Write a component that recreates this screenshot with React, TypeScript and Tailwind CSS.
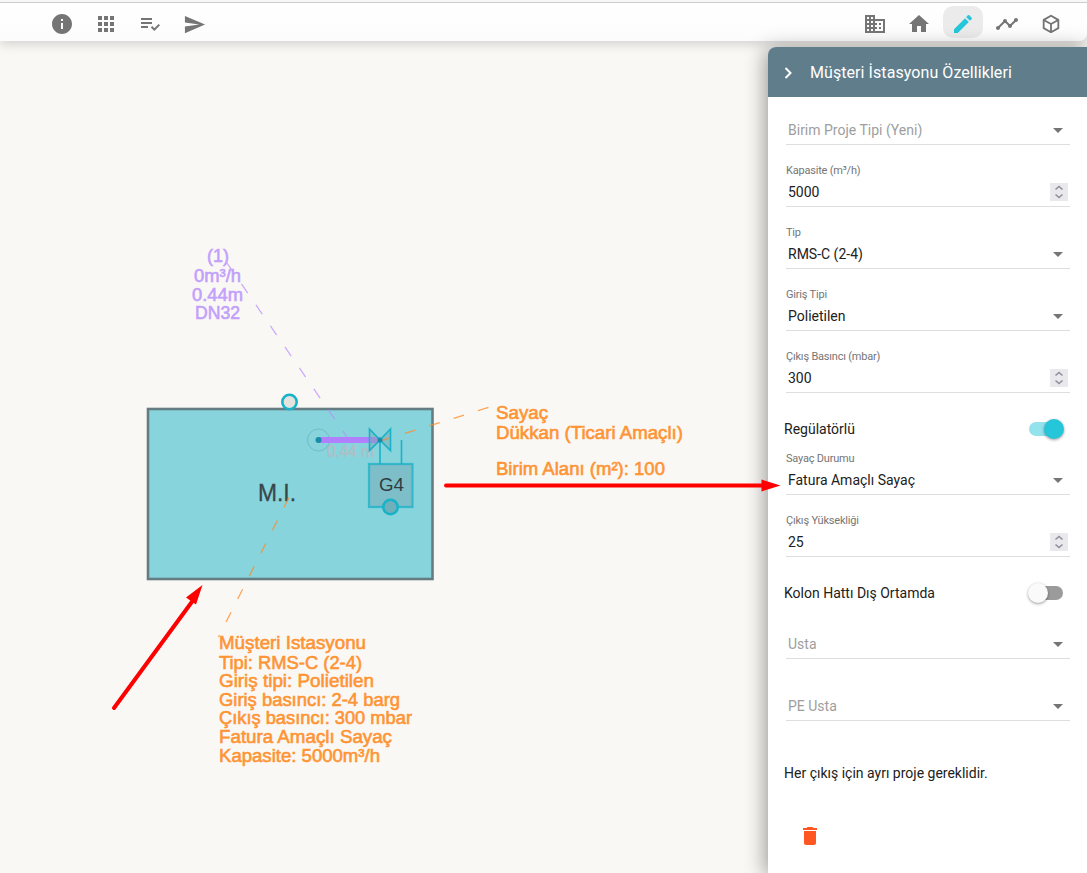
import type { ReactNode } from 'react';
import {
  MdApps,
  MdDelete,
  MdDomain,
  MdEdit,
  MdHome,
  MdInfo,
  MdPlaylistAddCheck,
  MdSend,
  MdTimeline,
} from 'react-icons/md';

function CubeIcon() {
  return (
    <svg viewBox="0 0 24 24" className="size-[22px] fill-current">
      <path d="M21 16.5c0 .38-.21.71-.53.88l-7.9 4.44c-.16.12-.36.18-.57.18s-.41-.06-.57-.18l-7.9-4.44A1 1 0 0 1 3 16.5v-9c0-.38.21-.71.53-.88l7.9-4.44c.16-.12.36-.18.57-.18s.41.06.57.18l7.9 4.44c.32.17.53.5.53.88v9M12 4.15 6.04 7.5 12 10.85l5.96-3.35L12 4.15M5 15.91l6 3.38v-6.71L5 9.21v6.7m14 0v-6.7l-6 3.37v6.71l6-3.38Z" />
    </svg>
  );
}

function ToolButton({ children, active = false }: { children: ReactNode; active?: boolean }) {
  return (
    <button
      className={`flex h-8 w-10 items-center justify-center rounded-[10px] pt-1 text-2xl ${
        active ? 'bg-[#ebebeb] text-[#26c6da]' : 'text-[#757575]'
      }`}
    >
      {children}
    </button>
  );
}

function Toolbar() {
  return (
    <header className="flex h-[41px] shrink-0 flex-col rounded-br-lg border-t-2 border-[#f7f7f7] bg-gradient-to-b from-white to-[#fcfcfc] shadow-[0_3px_12px_rgba(0,0,0,0.16)]">
      <div className="flex justify-between border-t border-[#cccccc] pl-[42px] pr-4 pt-[3px]">
        <div className="flex gap-1">
          <ToolButton><MdInfo /></ToolButton>
          <ToolButton><MdApps /></ToolButton>
          <ToolButton><MdPlaylistAddCheck /></ToolButton>
          <ToolButton><MdSend className="size-[23px]" /></ToolButton>
        </div>
        <div className="flex gap-1">
          <ToolButton><MdDomain /></ToolButton>
          <ToolButton><MdHome /></ToolButton>
          <ToolButton active><MdEdit /></ToolButton>
          <ToolButton><MdTimeline /></ToolButton>
          <ToolButton><CubeIcon /></ToolButton>
        </div>
      </div>
    </header>
  );
}

interface FieldProps {
  label?: string;
  value?: string;
  placeholder?: string;
  kind: 'select' | 'number';
}

function Field({ label, value, placeholder, kind }: FieldProps) {
  return (
    <div className="mx-[18px] mr-[17px] h-[62px] pt-[18px]">
      <div className="h-[11px] text-[11px] leading-3 tracking-[-0.2px] text-[#757575]">{label}</div>
      <div className="flex h-[31px] items-center justify-between border-b border-[#dedede] pl-0.5">
        <span className={`pt-px text-sm leading-5 ${value ? 'text-[#212121]' : 'text-[#9e9e9e]'}`}>
          {value ?? placeholder}
        </span>
        {kind === 'select' ? (
          <svg viewBox="0 0 10 5" className="mr-[7px] mt-0.5 h-[5px] w-2.5 fill-[#757575]">
            <path d="M0 0h10L5 5z" />
          </svg>
        ) : (
          <svg viewBox="0 0 18 18" className="mr-0.5 mt-0.5 size-[18px] bg-[#e9e9ed] fill-none stroke-[#8f8f9d] stroke-[1.6]">
            <path d="M5.5 6.5 9 3.5l3.5 3M5.5 11.5l3.5 3 3.5-3" />
          </svg>
        )}
      </div>
    </div>
  );
}

function Toggle({ label, on = false }: { label: string; on?: boolean }) {
  return (
    <div className="flex h-5 items-center justify-between pl-4 pr-6 text-sm text-[#212121]">
      {label}
      <span className={`relative h-3.5 w-[34px] rounded-full ${on ? 'bg-[#93e3ed]' : 'bg-[#9b9b9b]'}`}>
        <span
          className={`absolute -top-[3px] size-5 rounded-full shadow-[0_1px_3px_rgba(0,0,0,0.4)] ${
            on ? '-right-px bg-[#26c6da]' : '-left-px bg-[#fafafa]'
          }`}
        />
      </span>
    </div>
  );
}

function PropertiesPanel() {
  return (
    <aside className="z-10 mt-1.5 flex w-[319px] shrink-0 flex-col rounded-tl-lg bg-white shadow-[-3px_2px_20px_rgba(0,0,0,0.38)]">
      <h1 className="flex h-[50px] shrink-0 items-center rounded-tl-lg bg-[#607d8b] pl-4 pt-0.5 text-base font-normal tracking-[0.07px] text-white">
        <svg viewBox="0 0 8 12" className="mr-[18px] h-3 w-2 fill-none stroke-white stroke-2">
          <path d="M1.500 1l5 5-5 5" />
        </svg>
        Müşteri İstasyonu Özellikleri
      </h1>
      <div className="-mt-3">
        <Field kind="select" placeholder="Birim Proje Tipi (Yeni)" />
        <Field kind="number" label="Kapasite (m³/h)" value="5000" />
        <Field kind="select" label="Tip" value="RMS-C (2-4)" />
        <Field kind="select" label="Giriş Tipi" value="Polietilen" />
        <Field kind="number" label="Çıkış Basıncı (mbar)" value="300" />
      </div>
      <div className="mt-6">
        <Toggle label="Regülatörlü" on />
      </div>
      <div className="-mt-1">
        <Field kind="select" label="Sayaç Durumu" value="Fatura Amaçlı Sayaç" />
        <Field kind="number" label="Çıkış Yüksekliği" value="25" />
      </div>
      <div className="mt-6">
        <Toggle label="Kolon Hattı Dış Ortamda" />
      </div>
      <div className="-mt-1">
        <Field kind="select" placeholder="Usta" />
        <Field kind="select" placeholder="PE Usta" />
      </div>
      <p className="pl-4 pt-10 text-sm leading-5 text-[#212121]">Her çıkış için ayrı proje gereklidir.</p>
      <button className="ml-[30px] mt-[41px] w-6 text-2xl text-[#ff5722]">
        <MdDelete />
      </button>
    </aside>
  );
}

interface Note {
  x: number;
  y: number;
  w: number;
  text: string;
}

const pipeNotes: Note[] = [
  { x: 207, y: 262, w: 22, text: '(1)' },
  { x: 194, y: 281.5, w: 47, text: '0m³/h' },
  { x: 192, y: 300.5, w: 51, text: '0.44m' },
  { x: 195, y: 319, w: 45, text: 'DN32' },
];

const orangeNotes: Note[] = [
  { x: 496, y: 418.5, w: 52, text: 'Sayaç' },
  { x: 496, y: 438.5, w: 187, text: 'Dükkan (Ticari Amaçlı)' },
  { x: 496, y: 475, w: 169, text: 'Birim Alanı (m²): 100' },
  { x: 219, y: 649, w: 147, text: 'Müşteri Istasyonu' },
  { x: 219, y: 668.5, w: 143, text: 'Tipi: RMS-C (2-4)' },
  { x: 219, y: 687, w: 155, text: 'Giriş tipi: Polietilen' },
  { x: 219, y: 705.5, w: 181, text: 'Giriş basıncı: 2-4 barg' },
  { x: 219, y: 724, w: 193, text: 'Çıkış basıncı: 300 mbar' },
  { x: 219, y: 742.5, w: 173, text: 'Fatura Amaçlı Sayaç' },
  { x: 219, y: 762, w: 161, text: 'Kapasite: 5000m³/h' },
];

function Notes({ items }: { items: Note[] }) {
  return items.map((n) => (
    <text key={n.text} x={n.x} y={n.y} textLength={n.w} lengthAdjust="spacingAndGlyphs">
      {n.text}
    </text>
  ));
}

function Drawing() {
  return (
    <svg
      viewBox="0 0 1087 873"
      className="pointer-events-none absolute left-0 top-0 h-[873px] w-[1087px] font-['Liberation_Sans',sans-serif]"
    >
      <rect x="148" y="409" width="284.5" height="170" fill="#87d4dc" stroke="#657d82" strokeWidth="2.6" />
      <circle cx="289.5" cy="402" r="7.2" fill="#e4e4df" stroke="#19b2c8" strokeWidth="2.6" />

      <text x="258" y="501" fontSize="24" textLength="38" lengthAdjust="spacingAndGlyphs" fill="#37474a" stroke="#37474a" strokeWidth=".3">M.I.</text>
      <text x="327" y="457" fontSize="16" textLength="47" lengthAdjust="spacingAndGlyphs" fill="#b2bec6" stroke="#b2bec6" strokeWidth=".4">0.44 m</text>

      <g fill="none" stroke="#ff8a24" strokeWidth="1.3" opacity=".75">
        <path d="M289 497.500L218.500 637" strokeDasharray="11 14.7" />
        <path d="M380 441L490 407" strokeDasharray="11 14.5" strokeDashoffset="-.5" />
      </g>
      <path d="M227 263L347 437" fill="none" stroke="#b98aff" strokeWidth="1.3" strokeDasharray="11 14.5" opacity=".7" />

      <circle cx="318.5" cy="440" r="11" fill="none" stroke="#71bdc7" strokeWidth="1" />
      <path d="M318 440H380" stroke="#b080ff" strokeWidth="6" />
      <circle cx="318.5" cy="440" r="3" fill="#168ea8" />
      <g fill="#7ba8b0" fillOpacity=".5" stroke="#19b2c8" strokeWidth="1.6">
        <path d="M369.5 429v21.5L380 440zM390.5 429v21.5L380 440z" />
        <path d="M380 440v24M401.500 440v24" fill="none" />
        <rect x="369" y="464" width="43.500" height="43" fill="#7ebec8" fillOpacity="1" strokeWidth="2.2" strokeOpacity=".75" />
      </g>
      <path d="M380 441L390 438" stroke="#cf9a62" strokeWidth="1.3" />
      <circle cx="380" cy="440" r="2.5" fill="#168ea8" />
      <text x="379" y="490.500" fontSize="18" textLength="25" lengthAdjust="spacingAndGlyphs" fill="#2e3d40">G4</text>
      <circle cx="390.500" cy="507" r="7.2" fill="#6fb0ba" stroke="#19b2c8" strokeWidth="2.6" />

      <g fontSize="18.500" fill="#c2a0fb" stroke="#c2a0fb" strokeWidth=".6">
        <Notes items={pipeNotes} />
      </g>
      <g fontSize="18.500" fill="#ff9434" stroke="#ff9434" strokeWidth=".6">
        <Notes items={orangeNotes} />
      </g>
    </svg>
  );
}

function Arrows() {
  return (
    <svg
      viewBox="0 0 1087 873"
      className="pointer-events-none absolute left-0 top-0 z-20 h-[873px] w-[1087px] fill-[#fe0000] stroke-[#fe0000]"
    >
      <path d="M446 485.500H764M114 708L194 599" strokeWidth="4" strokeLinecap="round" />
      <path d="M761.500 479.500V491.500L780.500 485.500zM202.500 585L186 597.500L196 604.500z" stroke="none" />
    </svg>
  );
}

export default function App() {
  return (
    <div className="relative flex h-[873px] w-[1087px] flex-col overflow-hidden bg-[#faf8f5] font-[Roboto,sans-serif]">
      <Toolbar />
      <main className="flex flex-1 justify-end">
        <Drawing />
        <PropertiesPanel />
      </main>
      <Arrows />
    </div>
  );
}
